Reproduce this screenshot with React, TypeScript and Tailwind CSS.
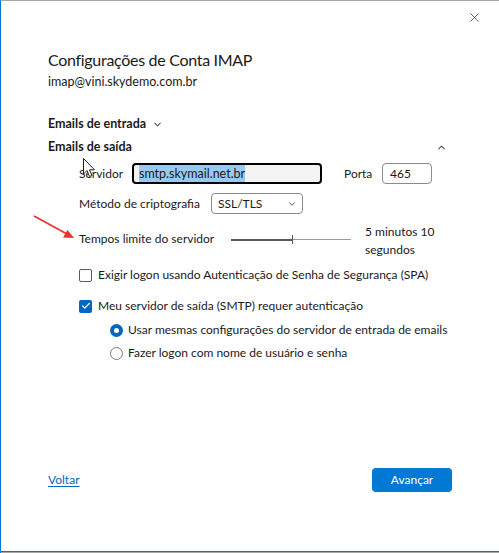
import { ChevronDown, ChevronUp, X, Check } from "lucide-react";

const font = { fontFamily: 'Lato, "Liberation Sans", sans-serif' };

function Checkbox({ checked }: { checked?: boolean }) {
  return checked ? (
    <span className="flex h-[13px] w-[13px] shrink-0 items-center justify-center rounded-[2px] bg-[#0067c0]">
      <Check size={10} strokeWidth={3} className="text-white" />
    </span>
  ) : (
    <span className="h-[13px] w-[13px] shrink-0 rounded-[2px] border border-[#5c5c5c] bg-white" />
  );
}

function Radio({ checked }: { checked?: boolean }) {
  return checked ? (
    <span className="flex h-[13px] w-[13px] shrink-0 items-center justify-center rounded-full bg-[#0067c0]">
      <span className="h-[5px] w-[5px] rounded-full bg-white" />
    </span>
  ) : (
    <span className="h-[13px] w-[13px] shrink-0 rounded-full border border-[#7a7a7a] bg-white" />
  );
}

// arrow pointer over the section header
function Cursor() {
  return (
    <svg className="absolute left-[82px] top-[157px]" width="13" height="20" viewBox="0 0 13 20">
      <path d="M0.5 0.5 L0.5 16 L4 12.5 L6.5 18.5 L9 17.5 L6.5 11.8 L11.5 11.8 Z" fill="white" stroke="#222" strokeWidth="1" strokeLinejoin="round" />
    </svg>
  );
}

// red annotation arrow
function Annotation() {
  return (
    <svg className="absolute left-[30px] top-[212px]" width="46" height="28" viewBox="0 0 46 28">
      <line x1="3" y1="3" x2="36" y2="21" stroke="#e8322e" strokeWidth="1.6" />
      <path d="M43 25 L32 24.5 L36.5 17 Z" fill="#e8322e" />
    </svg>
  );
}

export default function App() {
  return (
    <div style={font} className="relative h-[553px] w-[499px] overflow-hidden whitespace-nowrap border-t border-l border-t-[#a6a6a6] border-l-[#0078d4] bg-white text-[12px] text-[#1a1a1a]">
      <div className="flex justify-end pr-[17px] pt-[9px]">
        <X size={15} strokeWidth={1.2} className="text-[#333]" />
      </div>

      <div className="pl-[47px] pr-[50px]">
        <h1 className="mt-[23px] text-[16px] leading-[24px] tracking-[-0.3px] text-[#1a1a1a]">Configurações de Conta IMAP</h1>
        <p className="mt-[1px] text-[12.5px] leading-[18px]">imap@vini.skydemo.com.br</p>

        <div className="mt-[24px] flex items-center gap-[6px] text-[12.5px] font-bold leading-[18px]">
          Emails de entrada
          <ChevronDown size={11} strokeWidth={2.5} className="text-[#555]" />
        </div>

        <div className="mt-[5px] flex items-center justify-between text-[12.5px] font-bold leading-[18px]">
          Emails de saída
          <ChevronUp size={11} strokeWidth={2.5} className="mr-[2px] text-[#555]" />
        </div>

        <div className="pl-[31px]">
          <div className="mt-[7px] flex items-center">
            <span className="w-[53px]">Servidor</span>
            <div className="flex h-[21px] w-[190px] items-center rounded-[4px] border-2 border-black bg-[#f3f3f3] px-[5px]">
              <span className="bg-[#99c9ef] text-[12.5px] leading-[17px] text-[#1a1a1a]">smtp.skymail.net.br</span>
            </div>
            <span className="ml-[22px] w-[38px]">Porta</span>
            <div className="flex h-[21px] w-[50px] items-center rounded-[4px] border border-[#8a8a8a] px-[7px]">465</div>
          </div>

          <div className="mt-[9px] flex items-center">
            <span className="w-[132px]">Método de criptografia</span>
            <div className="flex h-[21px] w-[92px] items-center justify-between rounded-[4px] border border-[#8a8a8a] pl-[6px] pr-[5px]">
              SSL/TLS
              <ChevronDown size={10} strokeWidth={2} className="text-[#333]" />
            </div>
          </div>

          <div className="mt-[9px] flex items-center">
            <span className="mt-[-5px] w-[152px] leading-[18px]">Tempos limite do servidor</span>
            <div className="mt-[-3px] flex h-[12px] w-[120px] items-center">
              <span className="h-[2px] w-[61px] bg-[#5a5a5a]" />
              <span className="h-[9px] w-[1px] bg-[#5a5a5a]" />
              <span className="h-[1px] flex-1 bg-[#9a9a9a]" />
            </div>
            <span className="ml-[14px] leading-[18px]">5 minutos 10<br />segundos</span>
          </div>

          <label className="mt-[7px] flex items-center gap-[6px] leading-[18px]">
            <Checkbox />
            Exigir logon usando Autenticação de Senha de Segurança (SPA)
          </label>

          <label className="mt-[13px] flex items-center gap-[6px] leading-[18px]">
            <Checkbox checked />
            Meu servidor de saída (SMTP) requer autenticação
          </label>

          <div className="pl-[31px]">
            <label className="mt-[6px] flex items-center gap-[5px] leading-[18px]">
              <Radio checked />
              Usar mesmas configurações do servidor de entrada de emails
            </label>
            <label className="mt-[5px] flex items-center gap-[5px] leading-[18px]">
              <Radio />
              Fazer logon com nome de usuário e senha
            </label>
          </div>
        </div>

        <div className="mt-[106px] flex items-center justify-between">
          <a className="text-[#0067c0] underline underline-offset-2">Voltar</a>
          <button className="mr-[-3px] h-[24px] w-[80px] rounded-[4px] bg-[#0078d4] text-white">Avançar</button>
        </div>
      </div>

      <div className="absolute bottom-0 left-0 right-0 h-[2px] border-b border-b-[#a6a6a6] bg-[#0078d4]" />
      <Cursor />
      <Annotation />
    </div>
  );
}
